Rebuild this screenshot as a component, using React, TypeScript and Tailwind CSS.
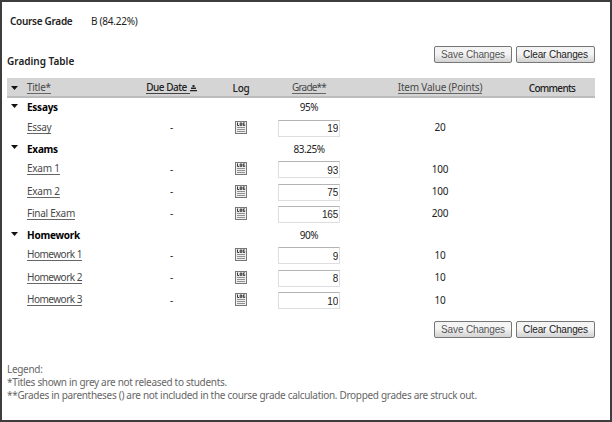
import React from "react";

type Item = { title: string; grade: string; value: string };
type Group = { name: string; percent: string; head: string; link: string; items: Item[] };

const groups: Group[] = [
  { name: "Essays", percent: "95%", head: "h-[19.6px]", link: "tracking-[-0.3px]", items: [{ title: "Essay", grade: "19", value: "20" }] },
  {
    name: "Exams",
    percent: "83.25%",
    head: "h-[19px]",
    link: "tracking-[-0.25px]",
    items: [
      { title: "Exam 1", grade: "93", value: "100" },
      { title: "Exam 2", grade: "75", value: "100" },
      { title: "Final Exam", grade: "165", value: "200" },
    ],
  },
  {
    name: "Homework",
    percent: "90%",
    head: "h-[19px]",
    link: "tracking-[-0.5px]",
    items: [
      { title: "Homework 1", grade: "9", value: "10" },
      { title: "Homework 2", grade: "8", value: "10" },
      { title: "Homework 3", grade: "10", value: "10" },
    ],
  },
];

const columns = "grid grid-cols-[20px_104px_80px_60px_76px_162px_86px]";
const link = "border-b border-[#666] leading-[11px] text-[#484848]";

function Arrow() {
  return (
    <svg width="7" height="4" viewBox="0 0 7 4" className="ml-1">
      <path d="M0 0h7L3.5 4z" fill="#111" />
    </svg>
  );
}

function SortIcon() {
  return (
    <svg width="7" height="8" viewBox="0 0 7 8">
      <path d="M2.5 1h2v2h-2zM1 3.5h5v1.5H1zM0 6h7v1.3H0z" fill="#222" />
    </svg>
  );
}

function LogIcon() {
  return (
    <svg width="12" height="13" viewBox="0 0 12 13">
      <rect x="0.5" y="0.5" width="11" height="12" fill="#eee" stroke="#777" />
      <path d="M2.5 1.5v3h1.7M5.2 2h1.6v2.4H5.2zM9.8 1.9H8.3v2.6h1.4V3.4" fill="none" stroke="#333" strokeWidth="1" />
      <path d="M2 6.5h8M2 8.5h8M2 10.5h8" stroke="#909090" />
    </svg>
  );
}

function Buttons() {
  const base =
    "flex h-[17px] items-center justify-center rounded-[2px] border border-[#777] bg-linear-to-b from-[#f4f4f4] from-45% to-[#d2d2d2] font-['Liberation_Sans',sans-serif] text-[10px] tracking-[-0.15px] whitespace-nowrap";
  return (
    <div className="flex justify-end gap-1 pr-[15px]">
      <button className={base + " w-[78px] text-[#555]"}>Save Changes</button>
      <button className={base + " w-[79px] text-[#222]"}>Clear Changes</button>
    </div>
  );
}

export default function App() {
  return (
    <div className="flex h-[422px] w-[612px] flex-col border-2 border-[#3e3c3d] bg-white pl-[5px] font-['Noto_Sans',sans-serif] text-[10px] leading-[13px] text-[#222]">
      <div className="flex h-[44px] pt-[13px] pl-[3px]">
        <div className="w-[81px] font-semibold tracking-[-0.3px]">Course Grade</div>
        <div className="tracking-[-0.25px]">B (84.22%)</div>
      </div>
      <Buttons />
      <div className="-mt-[8px] h-[23px] font-semibold">Grading Table</div>

      <div className="w-[588px]">
        <div className={columns + " h-[20px] items-center border-b-2 border-[#bcbcbc] bg-[#d5d5d5] pt-[2px]"}>
          <Arrow />
          <div className="flex"><span className={link + " tracking-[-0.3px]"}>Title*</span></div>
          <div className="flex items-center justify-center pl-px"><span className="border-b border-[#444] pr-[3px] leading-[11px] font-medium tracking-[-0.5px]">Due Date</span><SortIcon /></div>
          <div className="text-center font-medium tracking-[-0.3px]">Log</div>
          <div className="flex justify-center"><span className={link + " tracking-[-0.8px]"}>Grade**</span></div>
          <div className="flex justify-center pl-6"><span className={link + " tracking-[-0.2px]"}>Item Value (Points)</span></div>
          <div className="text-center font-medium tracking-[-0.7px]">Comments</div>
        </div>

        {groups.map((group) => (
          <React.Fragment key={group.name}>
            <div className={columns + " items-center " + group.head}>
              <div className="pb-1"><Arrow /></div>
              <div className="font-bold tracking-[-0.25px] text-black">{group.name}</div>
              <div />
              <div />
              <div className="text-center tracking-[-0.45px]">{group.percent}</div>
            </div>
            {group.items.map((item) => (
              <div key={item.title} className={columns + " h-[22.4px] items-center"}>
                <div />
                <div className="flex pb-[2px]"><span className={link + " " + group.link}>{item.title}</span></div>
                <div className="pb-[2px] pl-px text-center">-</div>
                <div className="flex justify-center pb-[3px]"><LogIcon /></div>
                <div className="flex justify-center pb-px">
                  <input
                    defaultValue={item.grade}
                    className="h-[17px] w-[62px] border border-[#dedede] border-t-[#b4b4b4] px-px pt-px text-right font-['Liberation_Sans',sans-serif] text-[10px] tracking-[-0.2px]"
                  />
                </div>
                <div className="pb-[2px] pl-6 text-center tracking-[-0.3px]">{item.value}</div>
              </div>
            ))}
          </React.Fragment>
        ))}
      </div>

      <div className="mt-[8.6px]"><Buttons /></div>

      <div className="mt-[25px] tracking-[-0.31px] text-[#666]">
        <p>Legend:</p>
        <p>*Titles shown in grey are not released to students.</p>
        <p className="whitespace-nowrap">**Grades in parentheses () are not included in the course grade calculation. Dropped grades are struck out.</p>
      </div>
    </div>
  );
}
